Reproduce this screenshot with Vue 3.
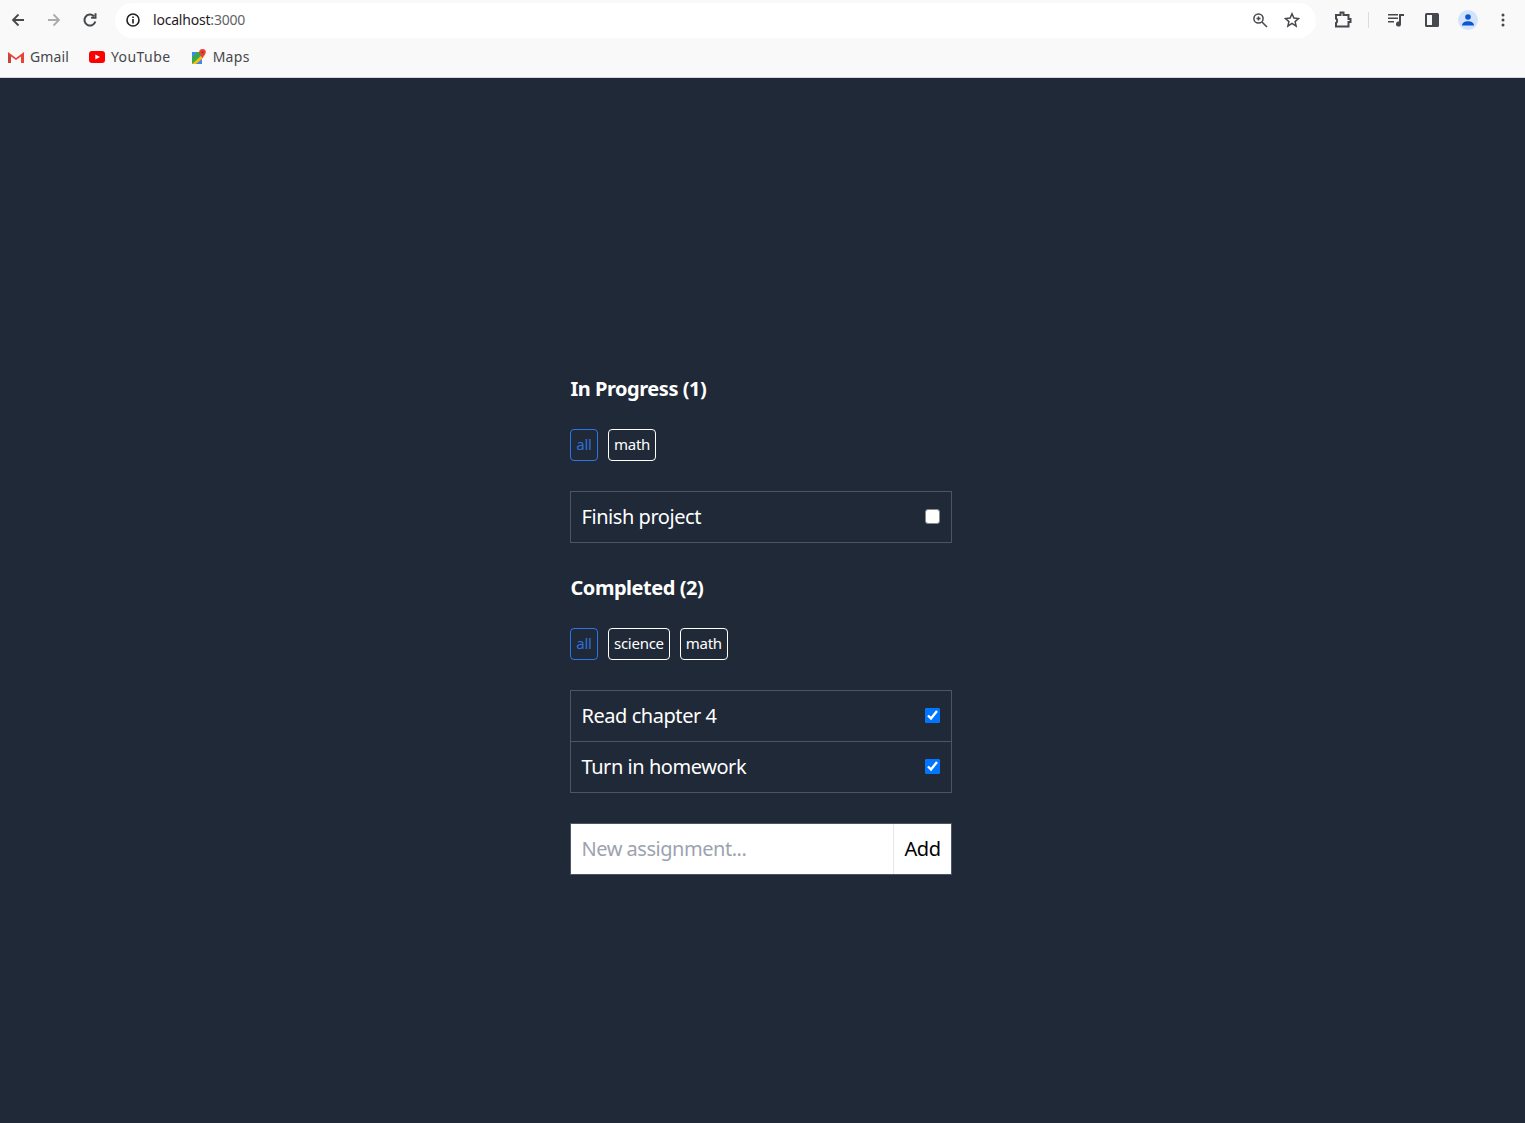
<script setup>
const inProgressTags = ['math']
const completedTags = ['science', 'math']
const completed = ['Read chapter 4', 'Turn in homework']
</script>

<template>
  <div class="browser">
    <div class="toolbar">
      <svg class="nav back" width="16" height="16" viewBox="0 0 16 16"><path d="M14 8H3.500M8.500 2.500 3 8l5.500 5.500" /></svg>
      <svg class="nav forward" width="16" height="16" viewBox="0 0 16 16"><path d="M2 8h10.500M7.500 2.500 13 8l-5.500 5.500" /></svg>
      <svg class="nav reload" width="16" height="16" viewBox="0 0 16 16"><path d="M13.300 9.500A5.500 5.500 0 1 1 11.900 4.200M13.500 1.300v4.400H9.100" /></svg>
      <div class="omnibox">
        <svg class="info" width="16" height="16" viewBox="0 0 16 16">
          <circle cx="8" cy="8" r="6" />
          <path d="M8 7v4.400M8 4.400v1.500" />
        </svg>
        <span class="url">localhost<span class="port">:3000</span></span>
        <svg class="zoom-icon" width="16" height="16" viewBox="0 0 16 16">
          <circle cx="6.500" cy="6.500" r="4.600" />
          <path d="M10 10l5 5M4.500 6.500h4M6.500 4.500v4" />
        </svg>
        <svg class="star" width="16" height="16" viewBox="0 0 16 16"><path d="M8 1.800l1.900 4.200 4.600.5-3.400 3.100 1 4.500L8 11.300l-4.100 2.800 1-4.500L1.500 6.500l4.600-.5z" /></svg>
      </div>
      <svg class="ext" width="18" height="18" viewBox="0 0 18 18"><path d="M2 4h4.500V1.500h3V4h5v4h2v3h-2v4.500H2V12c1.500-.5 1.500-4 0-4.500z" /></svg>
      <div class="sep"></div>
      <svg class="media" width="16" height="14" viewBox="0 0 16 14"><path d="M0 1h10v1.500H0zM0 4.500h10V6H0zM0 8h6v1.500H0z" /><path d="M11 1h5v2h-3v8a2.500 2.500 0 1 1-2-2.400z" /></svg>
      <svg class="panel" width="14" height="14" viewBox="0 0 14 14"><rect x="0" y="0" width="14" height="14" rx="1.500" /><rect x="2" y="2" width="5" height="10" fill="#f9f9fa" /></svg>
      <div class="avatar">
        <svg width="12" height="12" viewBox="0 0 12 12"><circle cx="6" cy="3" r="2.800" /><path d="M0 11.500c0-2.800 3-4.200 6-4.200s6 1.400 6 4.200z" /></svg>
      </div>
      <svg class="dots" width="4" height="14" viewBox="0 0 4 14"><circle cx="2" cy="2" r="1.500" /><circle cx="2" cy="7" r="1.500" /><circle cx="2" cy="12" r="1.500" /></svg>
    </div>
    <div class="bookmarks">
      <div class="bookmark gmail">
        <svg width="16" height="12" viewBox="0 0 16 12"><path d="M0 12V1l8 6 8-6v11h-3V5.500L8 9 3 5.500V12z" fill="#ea4335" /><path d="M3 12V5.500L0 3v9z" fill="#c5453a" /></svg>
        <span>Gmail</span>
      </div>
      <div class="bookmark youtube">
        <svg width="16" height="12" viewBox="0 0 16 12"><rect width="16" height="12" rx="3" fill="#f00" /><path d="M6.300 3.500 11 6 6.300 8.500z" fill="#fff" /></svg>
        <span>YouTube</span>
      </div>
      <div class="bookmark maps">
        <svg width="16" height="16" viewBox="0 0 16 16">
          <path d="M1 3h10v12H1z" fill="#34a853" />
          <path d="M1 15 11 6v9z" fill="#fbbc04" />
          <path d="M1 3h5L1 8z" fill="#4285f4" />
          <path d="M5 15l6-5v5z" fill="#4285f4" />
          <path d="M11.500 0a3.300 3.300 0 0 1 3.300 3.300c0 2.200-2.300 3.700-3.300 6.200-1-2.500-3.300-4-3.300-6.200A3.300 3.300 0 0 1 11.500 0z" fill="#ea4335" />
          <circle cx="11.500" cy="3.300" r="1" fill="#a52714" />
        </svg>
        <span>Maps</span>
      </div>
    </div>
  </div>

  <main class="page">
    <div class="column">
      <h2 class="heading">In Progress (1)</h2>
      <div class="tags">
        <button class="tag active">all</button>
        <button v-for="tag in inProgressTags" :key="tag" class="tag">{{ tag }}</button>
      </div>
      <ul class="list">
        <li class="item">
          <span>Finish project</span>
          <input type="checkbox" />
        </li>
      </ul>

      <h2 class="heading second">Completed (2)</h2>
      <div class="tags">
        <button class="tag active">all</button>
        <button v-for="tag in completedTags" :key="tag" class="tag">{{ tag }}</button>
      </div>
      <ul class="list">
        <li v-for="name in completed" :key="name" class="item">
          <span>{{ name }}</span>
          <input type="checkbox" checked />
        </li>
      </ul>

      <form class="add-form" @submit.prevent>
        <input class="add-input" type="text" placeholder="New assignment..." />
        <button class="add-btn" type="submit">Add</button>
      </form>
    </div>
  </main>
</template>

<style>
html,
body {
  margin: 0;
  background: #1f2937;
}
</style>

<style scoped>
.browser {
  height: 77px;
  background: #f9f9fa;
  border-bottom: 1px solid #d5d7da;
  font-family: "Noto Sans", sans-serif;
}

.toolbar {
  height: 39px;
  display: flex;
  align-items: center;
  padding-left: 10px;
  box-sizing: border-box;
}

.toolbar svg {
  flex: none;
}

.nav path {
  fill: none;
  stroke: #45484c;
  stroke-width: 1.8;
}

.forward {
  margin-left: 20px;
}

.forward path {
  stroke: #a9abae;
}

.reload {
  margin-left: 20px;
}

.reload path {
  stroke-width: 2;
}

.omnibox {
  margin-left: 17px;
  width: 1201px;
  height: 35px;
  margin-top: 1px;
  border-radius: 18px;
  background: #fff;
  display: flex;
  align-items: center;
  padding: 0 16px 0 10px;
  box-sizing: border-box;
}

.info circle,
.info path {
  fill: none;
  stroke: #1f2124;
  stroke-width: 1.6;
}

.url {
  margin-left: 12px;
  padding-bottom: 2px;
  font-size: 14px;
  color: #1f2124;
  letter-spacing: -0.2px;
  flex: 1;
}

.port {
  color: #5f6368;
}

.zoom-icon circle,
.zoom-icon path {
  fill: none;
  stroke: #45484c;
  stroke-width: 1.5;
}

.star {
  margin-left: 16px;
}

.star path {
  fill: none;
  stroke: #45484c;
  stroke-width: 1.5;
}

.ext {
  margin-left: 18px;
}

.ext path {
  fill: none;
  stroke: #45484c;
  stroke-width: 2;
}

.sep {
  width: 1px;
  height: 16px;
  background: #dadce0;
  margin-left: 16px;
}

.media {
  margin-left: 19px;
  fill: #45484c;
}

.panel {
  margin-left: 21px;
  fill: #45484c;
}

.avatar {
  margin-left: 19px;
  width: 20px;
  height: 20px;
  border-radius: 50%;
  background: #d3e3fd;
  display: flex;
  align-items: center;
  justify-content: center;
  fill: #0b57d0;
}

.dots {
  margin-left: 23px;
  fill: #45484c;
}

.bookmarks {
  height: 37px;
  display: flex;
  align-items: center;
  gap: 20px;
  padding-left: 8px;
  padding-bottom: 2px;
  box-sizing: border-box;
}

.bookmark {
  display: flex;
  align-items: center;
  gap: 6px;
  font-size: 14px;
  letter-spacing: 0.3px;
  color: #45484c;
}

.gmail {
  letter-spacing: 0.1px;
}

.youtube {
  letter-spacing: 0.45px;
}

.page {
  min-height: 1045px;
  background: #1f2937;
  padding-top: 299px;
  box-sizing: border-box;
  font-family: "Noto Sans", sans-serif;
}

.column {
  width: 382px;
  margin: 0 auto;
  position: relative;
  left: -1.5px;
}

.heading {
  margin: 0;
  padding-left: 0.5px;
  font-size: 20px;
  line-height: 24px;
  font-weight: 700;
  letter-spacing: -0.47px;
  color: #fff;
}

.second {
  margin-top: 33px;
}

.tags {
  display: flex;
  gap: 10px;
  margin-top: 28px;
}

.tag {
  height: 32px;
  min-width: 28px;
  padding: 0 5px 2px;
  border: 1px solid #fff;
  border-radius: 4px;
  background: transparent;
  color: #fff;
  font: 15px "Noto Sans", sans-serif;
  letter-spacing: -0.27px;
}

.tag.active {
  border-color: #2f74e4;
  color: #2f6fd8;
}

.list {
  list-style: none;
  margin: 30px 0 0;
  padding: 0;
  border: 1px solid #4b5563;
}

.item {
  height: 50px;
  display: flex;
  align-items: center;
  justify-content: space-between;
  padding: 0 11px 2px 10.5px;
  box-sizing: border-box;
  color: #fff;
  font-size: 20px;
  letter-spacing: -0.45px;
}

.item + .item {
  height: 51px;
  border-top: 1px solid #4b5563;
}

.item input {
  width: 15px;
  height: 15px;
  margin: 0;
}

.item input:not(:checked) {
  appearance: none;
  box-sizing: border-box;
  background: #fff;
  border: 1px solid #8a8a8a;
  border-radius: 3px;
}

.add-form {
  display: flex;
  margin-top: 30px;
  height: 52px;
  border: 1px solid #4b5563;
  box-sizing: border-box;
  background: #fff;
}

.add-input {
  flex: 1;
  min-width: 0;
  border: 0;
  outline: 0;
  padding: 0 10px 2px 10.5px;
  font: 20px "Noto Sans", sans-serif;
  letter-spacing: -0.47px;
  color: #000;
}

.add-input::placeholder {
  color: #9ca3af;
}

.add-btn {
  width: 58px;
  border: 0;
  border-left: 1px solid #e5e7eb;
  background: #fff;
  color: #000;
  padding: 0 0 2px;
  font: 20px "Noto Sans", sans-serif;
  letter-spacing: -0.47px;
}
</style>
